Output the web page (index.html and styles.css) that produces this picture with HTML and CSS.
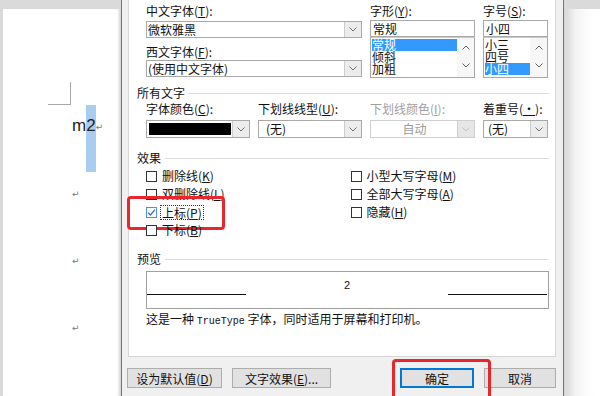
FILE: index.html
```html
<!DOCTYPE html>
<html lang="zh-CN">
<head>
    <meta charset="UTF-8">
    <title>字体</title>
    <link rel="stylesheet" href="styles.css">
</head>
<body>
<div class="screen">

    <!-- 文档左侧 -->
    <div class="doc-left">
        <div class="page">
            <div class="corner"></div>
            <div class="lines">
                <div class="line"><span class="seg">m</span><span class="seg sel">2</span><span class="mark">↵</span></div>
                <div class="line"><span class="mark">↵</span></div>
                <div class="line"><span class="mark">↵</span></div>
                <div class="line"><span class="mark">↵</span></div>
            </div>
        </div>
    </div>

    <!-- 字体对话框 -->
    <div class="dialog">
        <div class="panel">
            <div class="font-row">
                <div class="col">
                    <div class="lbl first">中文字体(<u>T</u>):</div>
                    <div class="combo"><span class="val">微软雅黑</span><span class="drop"><svg width="8" height="5" viewBox="0 0 8 5"><path d="M0.5 0.5 L4 4 L7.5 0.5" fill="none" stroke="#707070"/></svg></span></div>
                    <div class="lbl second">西文字体(<u>F</u>):</div>
                    <div class="combo combo-2"><span class="val">(使用中文字体)</span><span class="drop"><svg width="8" height="5" viewBox="0 0 8 5"><path d="M0.5 0.5 L4 4 L7.5 0.5" fill="none" stroke="#707070"/></svg></span></div>
                </div>
                <div class="col">
                    <div class="lbl first">字形(<u>Y</u>):</div>
                    <div class="input">常规</div>
                    <div class="listbox">
                        <ul>
                            <li class="selected">常规</li>
                            <li>倾斜</li>
                            <li>加粗</li>
                        </ul>
                        <div class="scroll">
                            <svg width="8" height="5" viewBox="0 0 8 5"><path d="M0.5 4.5 L4 1 L7.5 4.5" fill="none" stroke="#606060"/></svg>
                            <svg width="8" height="5" viewBox="0 0 8 5"><path d="M0.5 0.5 L4 4 L7.5 0.5" fill="none" stroke="#606060"/></svg>
                        </div>
                    </div>
                </div>
                <div class="col">
                    <div class="lbl first">字号(<u>S</u>):</div>
                    <div class="input">小四</div>
                    <div class="listbox">
                        <ul>
                            <li>小三</li>
                            <li>四号</li>
                            <li class="selected">小四</li>
                        </ul>
                        <div class="scroll">
                            <svg width="8" height="5" viewBox="0 0 8 5"><path d="M0.5 4.5 L4 1 L7.5 4.5" fill="none" stroke="#606060"/></svg>
                            <svg width="8" height="5" viewBox="0 0 8 5"><path d="M0.5 0.5 L4 4 L7.5 0.5" fill="none" stroke="#606060"/></svg>
                        </div>
                    </div>
                </div>
            </div>

            <div class="group group-all"><span>所有文字</span><i></i></div>
            <div class="field-row">
                <div class="col">
                    <div class="lbl">字体颜色(<u>C</u>):</div>
                    <div class="combo combo-tall"><span class="swatch"></span><span class="drop"><svg width="8" height="5" viewBox="0 0 8 5"><path d="M0.5 0.5 L4 4 L7.5 0.5" fill="none" stroke="#707070"/></svg></span></div>
                </div>
                <div class="col">
                    <div class="lbl">下划线线型(<u>U</u>):</div>
                    <div class="combo combo-tall"><span class="val pad">(无)</span><span class="drop"><svg width="8" height="5" viewBox="0 0 8 5"><path d="M0.5 0.5 L4 4 L7.5 0.5" fill="none" stroke="#707070"/></svg></span></div>
                </div>
                <div class="col">
                    <div class="lbl disabled">下划线颜色(<u>I</u>):</div>
                    <div class="combo combo-tall combo-disabled"><span class="val center">自动</span><span class="drop"><svg width="8" height="5" viewBox="0 0 8 5"><path d="M0.5 0.5 L4 4 L7.5 0.5" fill="none" stroke="#c4c4c4"/></svg></span></div>
                </div>
                <div class="col">
                    <div class="lbl">着重号(<u>·</u>):</div>
                    <div class="combo combo-tall"><span class="val pad-s">(无)</span><span class="drop"><svg width="8" height="5" viewBox="0 0 8 5"><path d="M0.5 0.5 L4 4 L7.5 0.5" fill="none" stroke="#707070"/></svg></span></div>
                </div>
            </div>

            <div class="group group-fx"><span>效果</span><i></i></div>
            <div class="effects">
                <div class="checks">
                    <div class="check"><span class="box"></span><span>删除线(<u>K</u>)</span></div>
                    <div class="check"><span class="box"></span><span>双删除线(<u>L</u>)</span></div>
                    <div class="check marked">
                        <span class="box checked"><svg width="9" height="9" viewBox="0 0 9 9"><path d="M1 4.6 L3.4 7 L8 1.6" fill="none" stroke="#2b6fd3" stroke-width="1.3"/></svg></span>
                        <span class="focus">上标(<u>P</u>)</span>
                    </div>
                    <div class="check"><span class="box"></span><span>下标(<u>B</u>)</span></div>
                </div>
                <div class="checks">
                    <div class="check"><span class="box"></span><span>小型大写字母(<u>M</u>)</span></div>
                    <div class="check"><span class="box"></span><span>全部大写字母(<u>A</u>)</span></div>
                    <div class="check"><span class="box"></span><span>隐藏(<u>H</u>)</span></div>
                </div>
            </div>

            <div class="group group-fx"><span>预览</span><i></i></div>
            <div class="preview">
                <div class="rule"></div>
                <div class="sample">2</div>
                <div class="rule"></div>
            </div>
            <p class="note">这是一种 <span class="mono">TrueType</span> 字体，同时适用于屏幕和打印机。</p>
        </div>

        <!-- 底部按钮 -->
        <div class="buttons">
            <button class="btn btn-default-set">设为默认值(<u>D</u>)</button>
            <button class="btn btn-effect">文字效果(<u>E</u>)...</button>
            <button class="btn btn-ok marked-btn">确定</button>
            <button class="btn btn-cancel">取消</button>
        </div>
    </div>

    <!-- 文档右侧 -->
    <div class="doc-right"></div>
</div>
</body>
</html>
```

FILE: styles.css
```css
* {
    box-sizing: border-box;
}

body {
    margin: 0;
    font-family: "Noto Sans CJK SC", "Noto Sans", sans-serif;
    font-size: 12px;
    color: #111;
    background: #fff;
}

.screen {
    display: flex;
    width: 600px;
    height: 396px;
    overflow: hidden;
}

/* 文档区域 */
.doc-left {
    width: 121px;
    flex: none;
    background: #dadada;
    padding: 9px 0 0 3px;
}

.page {
    height: 100%;
    background: #fff;
    box-shadow: inset -4px 0 3px -2px rgba(0, 0, 0, 0.18);
    padding: 73px 0 0 45px;
}

.corner {
    width: 23px;
    height: 23px;
    border-right: 1px solid #a8a8a8;
    border-bottom: 1px solid #a8a8a8;
}

.lines {
    margin-left: 24px;
}

.line {
    display: flex;
    height: 67px;
}

.seg {
    padding-top: 10px;
    line-height: 22px;
    font-family: "Liberation Sans", Arial, sans-serif;
    font-size: 17px;
    color: #222;
}

.sel {
    background: #a9cdf1;
}

.mark {
    padding-top: 17px;
    font-family: "DejaVu Sans", sans-serif;
    font-size: 9px;
    line-height: 10px;
    color: #777;
}

.doc-right {
    flex: 1;
    background:
        linear-gradient(to bottom, #dadada 0, #dadada 9px, transparent 9px),
        linear-gradient(to right, #d6d6d6, #f4f4f4 12px, #fff 30px);
}

/* 对话框 */
.dialog {
    width: 443px;
    flex: none;
    display: flex;
    flex-direction: column;
    background: #f0f0f0;
    border-left: 1px solid #3f7fd0;
    border-right: 1px solid #3f7fd0;
    padding: 0 7px 0 6px;
}

.panel {
    height: 357px;
    background: #fff;
    border: 1px solid #d6d6d6;
    border-top: 0;
    padding-left: 8px;
}

.lbl {
    line-height: 14px;
    white-space: nowrap;
}

.lbl.disabled {
    color: #a0a0a0;
}

.font-row {
    display: grid;
    grid-template-columns: 216px 105px 65px;
    column-gap: 8px;
    padding: 4px 0 0 9px;
}

.font-row .combo {
    margin-top: 3px;
}

.font-row .lbl.second {
    margin-top: 7px;
}

.font-row .combo.combo-2 {
    margin-top: 1px;
}

.combo {
    display: flex;
    height: 17px;
    border: 1px solid #a9a9a9;
    background: #fff;
}

.combo-tall {
    height: 18px;
    margin-top: 4px;
}

.combo .val {
    flex: 1;
    padding-left: 1px;
    line-height: 15px;
    white-space: nowrap;
    overflow: hidden;
}

.combo-tall .val {
    line-height: 16px;
}

.combo .val.pad {
    padding-left: 7px;
}

.combo .val.pad-s {
    padding-left: 4px;
}

.combo .val.center {
    text-align: center;
    color: #9a9a9a;
}

.combo-disabled {
    border-color: #cfcfcf;
}

.drop {
    width: 17px;
    flex: none;
    display: flex;
    align-items: center;
    justify-content: center;
    background: #ececec;
    border-left: 1px solid #cdcdcd;
}

.combo-disabled .drop {
    background: #e6e6e6;
}

.swatch {
    flex: 1;
    margin: 2px 1px 2px 2px;
    background: #000;
}

.input {
    height: 17px;
    margin-top: 2px;
    border: 1px solid #a9a9a9;
    padding-left: 2px;
    line-height: 15px;
}

.listbox {
    display: flex;
    height: 41px;
    border: 1px solid #a9a9a9;
    border-top-color: #c8c8c8;
}

.listbox ul {
    flex: 1;
    margin: 0;
    padding: 1px 0 0 1px;
    list-style: none;
}

.listbox li {
    line-height: 12px;
    height: 12px;
    white-space: nowrap;
}

.listbox li.selected {
    background: #3399ff;
    color: #fff;
}

.scroll {
    width: 17px;
    display: flex;
    flex-direction: column;
    align-items: center;
    justify-content: space-between;
    padding: 7px 0 9px;
    background: #f7f7f7;
}

/* 分组标题 */
.group {
    display: flex;
    align-items: center;
    line-height: 14px;
    margin-right: 6px;
}

.group i {
    flex: 1;
    height: 1px;
    background: #dcdcdc;
}

.group-all {
    margin-top: 8px;
}

.group-all i {
    margin-left: 3px;
}

.group-fx {
    margin-top: 13px;
}

.group-fx i {
    margin-left: 4px;
}

.field-row {
    display: grid;
    grid-template-columns: 104px 104px 105px 65px;
    column-gap: 8px;
    padding: 2px 0 0 9px;
}

/* 效果 */
.effects {
    display: flex;
    margin-top: 2px;
    padding-left: 9px;
}

.checks {
    width: 275px;
}

.check {
    position: relative;
    display: flex;
    align-items: center;
    gap: 5px;
    height: 18px;
    line-height: 14px;
    white-space: nowrap;
}

.box {
    width: 11px;
    height: 11px;
    flex: none;
    border: 1px solid #333;
    background: #fff;
    display: flex;
    align-items: center;
    justify-content: center;
}

.box.checked {
    border-color: #4f91de;
}

.focus {
    line-height: 13px;
    padding: 0 1px;
    margin-left: -1px;
    outline: 1px dotted #333;
}

.marked::after {
    content: "";
    position: absolute;
    left: -19px;
    top: -7px;
    width: 92px;
    height: 28px;
    border: 3px solid #e8262b;
    border-radius: 4px;
}

/* 预览 */
.preview {
    display: flex;
    width: 403px;
    height: 38px;
    margin: 5px 0 0 9px;
    border: 1px solid #a0a0a0;
}

.rule {
    width: 99px;
    height: 23px;
    border-bottom: 1px solid #111;
}

.preview .rule:last-child {
    margin-right: 1px;
}

.sample {
    flex: 1;
    text-align: center;
    padding-top: 7px;
    font-family: "Liberation Sans", Arial, sans-serif;
    font-size: 11px;
    line-height: 12px;
}

.note {
    margin: 3px 0 0 9px;
    line-height: 14px;
    white-space: nowrap;
}

.mono {
    font-family: "Liberation Mono", monospace;
    font-size: 10px;
}

/* 按钮 */
.buttons {
    display: flex;
    margin: 11px -1px 0 -1px;
}

.btn {
    height: 20px;
    padding: 0;
    border: 1px solid #adadad;
    background: #e1e1e1;
    font-family: inherit;
    font-size: 12px;
    line-height: 17px;
    color: #111;
}

.btn-default-set {
    width: 95px;
}

.btn-effect {
    width: 99px;
    margin-left: 10px;
}

.btn-ok {
    position: relative;
    width: 74px;
    margin-left: auto;
    border-color: #0078d7;
    box-shadow: inset 0 0 0 1px #0078d7;
}

.btn-cancel {
    width: 72px;
    margin-left: 10px;
    margin-right: 1px;
}

.marked-btn::after {
    content: "";
    position: absolute;
    left: -9px;
    top: -10px;
    width: 93px;
    height: 36px;
    border: 3px solid #e8262b;
    border-radius: 4px;
}
```
